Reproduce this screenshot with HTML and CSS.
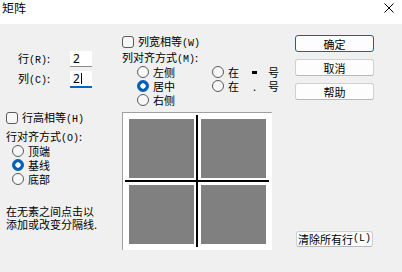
FILE: index.html
```html
<!DOCTYPE html>
<html lang="zh">
<head>
<meta charset="utf-8">
<title>矩阵</title>
<link rel="stylesheet" href="styles.css">
</head>
<body>
<div class="dialog">
  <div class="titlebar">
    <span class="title">矩阵</span>
    <svg class="close" width="10" height="10" viewBox="0 0 10 10"><path d="M0.5 0.5 L9.5 9.5 M9.5 0.5 L0.5 9.5" stroke="#000" stroke-width="1" fill="none"/></svg>
  </div>
  <div class="content">
    <div class="col-left">
      <div class="dims">
        <div class="dim-row"><span class="dim-label">行<span class="ak">(R)</span>:</span><span class="field">2</span></div>
        <div class="dim-row"><span class="dim-label">列<span class="ak">(C)</span>:</span><span class="field focus">2<span class="caret"></span></span></div>
      </div>
      <div class="check check-rows"><span class="box"></span><span>行高相等<span class="ak">(H)</span></span></div>
      <div class="group-label">行对齐方式<span class="ak">(O)</span>:</div>
      <div class="radios radios-left">
        <div class="opt"><span class="radio"></span><span>顶端</span></div>
        <div class="opt"><span class="radio on"></span><span>基线</span></div>
        <div class="opt"><span class="radio"></span><span>底部</span></div>
      </div>
      <p class="hint">在无素之间点击以<br>添加或改变分隔线.</p>
    </div>
    <div class="col-mid">
      <div class="check check-cols"><span class="box"></span><span>列宽相等<span class="ak">(W)</span></span></div>
      <div class="group-label mid-label">列对齐方式<span class="ak">(M)</span>:</div>
      <div class="radio-grid">
        <div class="opt"><span class="radio"></span><span>左侧</span></div>
        <div class="opt"><span class="radio"></span><span>在</span><span class="bar"></span><span>号</span></div>
        <div class="opt"><span class="radio on"></span><span>居中</span></div>
        <div class="opt"><span class="radio"></span><span>在</span><span class="dot">.</span><span>号</span></div>
        <div class="opt"><span class="radio"></span><span>右侧</span></div>
      </div>
      <div class="preview">
        <div class="cell"></div><div class="cell c2"></div>
        <div class="cell r2"></div><div class="cell c2 r2"></div>
        <span class="vline"></span>
        <span class="hline"></span>
      </div>
    </div>
    <div class="col-right">
      <div class="btn primary">确定</div>
      <div class="btn">取消</div>
      <div class="btn">帮助</div>
      <div class="btn clear">清除所有行<span class="ak">(L)</span></div>
    </div>
  </div>
</div>
</body>
</html>
```

FILE: styles.css
```css
html, body {
  margin: 0;
  padding: 0;
}
body {
  width: 402px;
  height: 272px;
  overflow: hidden;
  background: #f0f0f0;
  font-family: "Noto Sans CJK SC", "Noto Sans", sans-serif;
  font-size: 11px;
  line-height: 12px;
  color: #000;
}
.dialog {
  width: 402px;
  height: 272px;
  display: flex;
  flex-direction: column;
}
.titlebar {
  height: 24px;
  background: #fff;
  display: flex;
  justify-content: space-between;
  align-items: flex-start;
  padding: 0 8px 0 2px;
  box-sizing: border-box;
}
.title {
  font-size: 12px;
  line-height: 12px;
  margin-top: 2px;
}
.close {
  margin-top: 3px;
  display: block;
}
.content {
  flex: 1;
  display: flex;
  padding-left: 6px;
}
.ak {
  font-family: "Liberation Mono", "DejaVu Sans Mono", monospace;
  font-size: 10px;
}
/* left column */
.col-left {
  width: 116px;
  display: flex;
  flex-direction: column;
}
.dims {
  margin-top: 27px;
  padding-left: 12px;
  display: flex;
  flex-direction: column;
  gap: 4px;
}
.dim-row {
  display: flex;
  align-items: center;
  height: 16px;
}
.dim-label {
  width: 52px;
}
.field {
  width: 22px;
  height: 16px;
  box-sizing: border-box;
  background: #fff;
  border-bottom: 1px solid #8a8a8a;
  padding-left: 3px;
  font-family: "Noto Sans", sans-serif;
  font-size: 12px;
  line-height: 15px;
  display: flex;
  align-items: center;
}
.field.focus {
  border-bottom: 2px solid #0067c0;
  height: 17px;
}
.caret {
  display: inline-block;
  width: 1px;
  height: 11px;
  background: #000;
  margin-left: 1px;
}
.check {
  display: flex;
  align-items: center;
  gap: 4px;
  height: 12px;
}
.box {
  width: 12px;
  height: 12px;
  box-sizing: border-box;
  border: 1px solid #5a5a5a;
  border-radius: 3px;
  background: #f7f7f7;
}
.check-rows {
  margin-top: 25px;
}
.group-label {
  margin-top: 6px;
  height: 12px;
}
.radios {
  display: flex;
  flex-direction: column;
}
.radios-left {
  margin-top: 2px;
  padding-left: 6px;
}
.opt {
  display: flex;
  align-items: center;
  height: 14px;
  gap: 4px;
}
.radio {
  width: 12px;
  height: 12px;
  box-sizing: border-box;
  border-radius: 50%;
  border: 1px solid #5a5a5a;
  background: #f7f7f7;
}
.radio.on {
  border-color: #005fb8;
  background: radial-gradient(circle, #fff 0 2.4px, #005fb8 3px);
}
.hint {
  margin: 19px 0 0 0;
  line-height: 13px;
}
/* middle column */
.col-mid {
  width: 150px;
  display: flex;
  flex-direction: column;
}
.check-cols {
  margin-top: 12px;
}
.mid-label {
  margin-top: 3px;
}
.radio-grid {
  margin-top: 2px;
  padding-left: 15px;
  display: grid;
  grid-template-columns: 75px auto;
}
.bar {
  display: inline-block;
  width: 5px;
  height: 3px;
  background: #000;
  margin: 0 7px 0 9px;
}
.dot {
  width: 5px;
  margin: 0 7px 0 9px;
  text-align: center;
}
.preview {
  margin-top: 5px;
  width: 150px;
  height: 138px;
  box-sizing: border-box;
  background: #fff;
  border-top: 1px solid #a0a0a0;
  border-left: 1px solid #a0a0a0;
  padding: 6px 6px 6px 6px;
  display: grid;
  grid-template-columns: 65px 65px;
  grid-template-rows: 59px 59px;
  column-gap: 7px;
  row-gap: 7px;
  position: relative;
}
.cell {
  background: #808080;
}
.vline {
  position: absolute;
  left: 73px;
  top: 2px;
  width: 2px;
  height: 132px;
  background: #000;
}
.hline {
  position: absolute;
  left: 2px;
  top: 67px;
  width: 144px;
  height: 2px;
  background: #000;
}
/* right column */
.col-right {
  margin-left: 23px;
  width: 79px;
  display: flex;
  flex-direction: column;
  gap: 7px;
  padding-top: 11px;
  padding-bottom: 25px;
}
.btn {
  height: 17px;
  box-sizing: border-box;
  border: 1px solid #d0d0d0;
  border-bottom-color: #b8b8b8;
  border-radius: 3px;
  background: #fdfdfd;
  display: flex;
  align-items: center;
  justify-content: center;
}
.btn.primary {
  border-color: #0067c0;
}
.btn.clear {
  margin-top: auto;
  height: 16px;
  margin-left: 1px;
  width: 77px;
  white-space: nowrap;
}
```
